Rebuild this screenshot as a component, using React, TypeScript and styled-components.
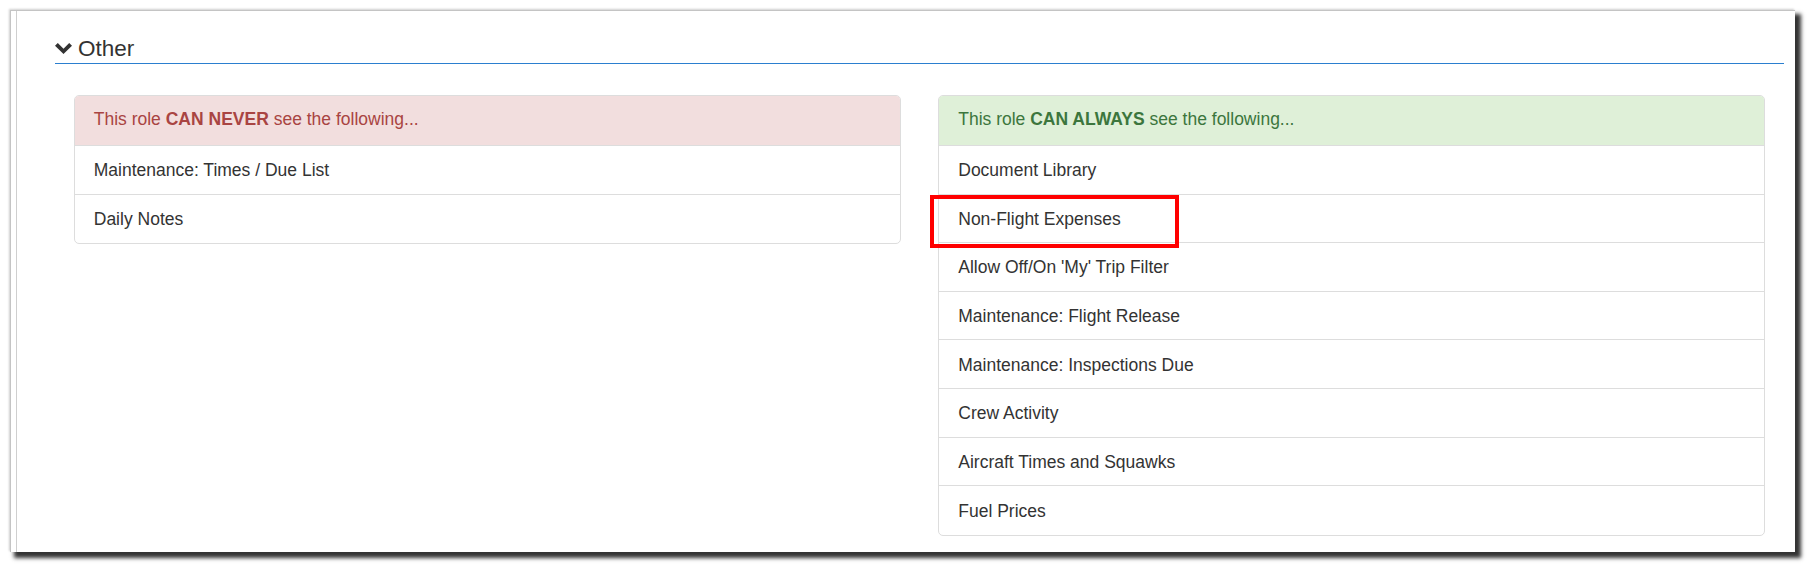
import React from "react";
import styled, { createGlobalStyle } from "styled-components";

const GlobalStyle = createGlobalStyle`
  html, body {
    margin: 0;
    padding: 0;
    background: #ffffff;
    min-height: 570px;
  }
  body {
    font-family: "Liberation Sans", Arial, Helvetica, sans-serif;
    color: #333333;
  }
  * { box-sizing: border-box; }
`;

const Page = styled.div`
  width: 1813px;
  height: 570px;
  padding: 10px 0 0 10px;
  background: #ffffff;
  overflow: hidden;
`;

const Frame = styled.div`
  width: 1785px;
  height: 542px;
  background: #ffffff;
  border-top: 1px solid #c4c4c4;
  border-left: 1px solid #c4c4c4;
  box-shadow: 5px 5px 4px 1px rgba(0, 0, 0, 0.8), -1px -1px 2px rgba(0, 0, 0, 0.18);
`;

const Inner = styled.div`
  margin-left: 5px;
  height: 100%;
  border-left: 1px solid #cfcfcf;
  padding: 25px 11px 0 38px;
`;

const SectionTitle = styled.div`
  display: flex;
  align-items: center;
  gap: 6px;
  height: 28px;
  padding-bottom: 2px;
  border-bottom: 1px solid #2b7fcf;
  font-size: 22.5px;
  line-height: 25px;
  color: #333333;
`;

const Chevron = styled.svg`
  width: 17px;
  height: 11px;
  flex: none;
  margin-bottom: 1px;
`;

const Columns = styled.div`
  display: grid;
  grid-template-columns: 1fr 1fr;
  margin-top: 31px;
`;

const Column = styled.div`
  padding: 0 18.75px;
`;

const Panel = styled.div`
  border: 1px solid #dddddd;
  border-radius: 5px;
  background: #ffffff;
`;

const PanelHeading = styled.div<{ $tone: "danger" | "success" }>`
  display: flex;
  align-items: center;
  height: 50px;
  padding: 0 18px 2px 19px;
  border-bottom: 1px solid #dddddd;
  border-radius: 4px 4px 0 0;
  font-size: 17.5px;
  line-height: 25px;
  background: ${(p) => (p.$tone === "danger" ? "#f2dede" : "#dff0d8")};
  color: ${(p) => (p.$tone === "danger" ? "#a94442" : "#3c763d")};
  b { font-weight: 700; }
`;

const Item = styled.div`
  position: relative;
  display: flex;
  align-items: center;
  height: 48.6px;
  padding: 2px 18px 0 19px;
  font-size: 17.5px;
  line-height: 25px;
  color: #333333;
  border-bottom: 1px solid #dddddd;
  &:last-child { border-bottom: none; }
`;

const Highlight = styled.div`
  position: absolute;
  left: -9px;
  top: 0;
  width: 249px;
  height: 53px;
  border: 4px solid #ff0000;
  pointer-events: none;
`;

const neverItems = ["Maintenance: Times / Due List", "Daily Notes"];
const alwaysItems = [
  "Document Library",
  "Non-Flight Expenses",
  "Allow Off/On 'My' Trip Filter",
  "Maintenance: Flight Release",
  "Maintenance: Inspections Due",
  "Crew Activity",
  "Aircraft Times and Squawks",
  "Fuel Prices",
];

export default function App() {
  return (
    <>
      <GlobalStyle />
      <Page>
        <Frame>
          <Inner>
            <SectionTitle>
              <Chevron viewBox="0 0 17 11">
                <path d="M0 2.8 L2.8 0 L8.5 5.7 L14.2 0 L17 2.8 L8.5 11 Z" fill="#333333" />
              </Chevron>
              <span>Other</span>
            </SectionTitle>
            <Columns>
              <Column>
                <Panel>
                  <PanelHeading $tone="danger">
                    <span>
                      This role <b>CAN NEVER</b> see the following...
                    </span>
                  </PanelHeading>
                  {neverItems.map((t) => (
                    <Item key={t}>{t}</Item>
                  ))}
                </Panel>
              </Column>
              <Column>
                <Panel>
                  <PanelHeading $tone="success">
                    <span>
                      This role <b>CAN ALWAYS</b> see the following...
                    </span>
                  </PanelHeading>
                  {alwaysItems.map((t) => (
                    <Item key={t}>
                      {t}
                      {t === "Non-Flight Expenses" && <Highlight />}
                    </Item>
                  ))}
                </Panel>
              </Column>
            </Columns>
          </Inner>
        </Frame>
      </Page>
    </>
  );
}
